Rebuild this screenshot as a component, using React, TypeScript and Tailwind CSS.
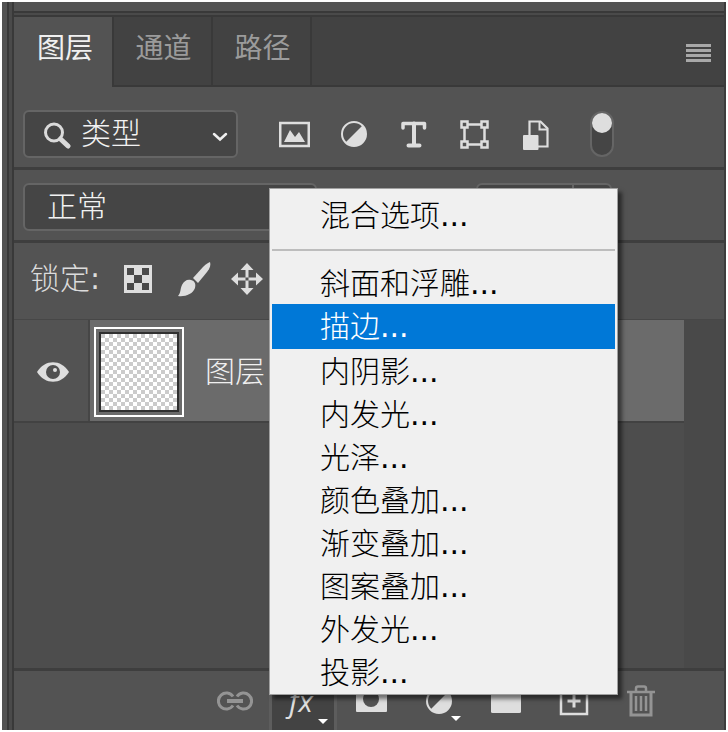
import type { ReactNode } from "react";

const FONT = "font-['DejaVu_Sans','Noto_Sans_CJK_SC',sans-serif]";

const effects = [
  "斜面和浮雕",
  "描边",
  "内阴影",
  "内发光",
  "光泽",
  "颜色叠加",
  "渐变叠加",
  "图案叠加",
  "外发光",
  "投影",
];

function Tab({ label, active = false }: { label: string; active?: boolean }) {
  return (
    <button
      role="tab"
      aria-selected={active}
      className={
        active
          ? "h-[70px] w-[100px] border-r-2 border-[#393939] bg-[#535353] pb-1.5 pl-1 text-[28px] font-normal text-[#f0f0f0]"
          : "h-[70px] w-[99px] border-r-2 border-b-2 border-[#393939] bg-[#424242] pb-1 pl-0.5 text-[28px] font-normal text-[#9b9b9b]"
      }
    >
      {label}
    </button>
  );
}

function IconButton({ label, children }: { label: string; children: ReactNode }) {
  return (
    <button aria-label={label} className="size-8 shrink-0">
      {children}
    </button>
  );
}

function FooterButton({ label, children }: { label: string; children: ReactNode }) {
  return (
    <button aria-label={label} className="flex h-full w-17 shrink-0 items-center justify-center">
      {children}
    </button>
  );
}

function HalfCircle() {
  return (
    <>
      <circle cx="16" cy="16" r="12" fill="none" stroke="#dedede" strokeWidth="2" />
      <path d="M24.5 7.5A12 12 0 0 1 7.5 24.5Z" fill="#dedede" />
    </>
  );
}

function FilterRow() {
  return (
    <div className="flex items-center border-b-3 border-[#3e3e3e] pt-[23px] pb-[9px] pl-[9px]">
      <div className="relative mr-10 w-[215px] shrink-0">
        <select
          aria-label="类型"
          className="h-12 w-full appearance-none rounded-md border-2 border-[#656565] bg-[#454545] pl-14 text-[30px] leading-10 font-light text-[#f2f2f2]"
        >
          <option>类型</option>
        </select>
        <svg viewBox="0 0 28 28" className="pointer-events-none absolute top-3 left-5 size-7" aria-hidden="true">
          <circle cx="11" cy="10.500" r="8.500" fill="none" stroke="#dadada" strokeWidth="3" />
          <path d="M17.500 17L25 24" stroke="#dadada" strokeWidth="5" strokeLinecap="round" />
        </svg>
        <svg viewBox="0 0 16 10" className="pointer-events-none absolute top-[22px] right-[10px] h-[10px] w-4" aria-hidden="true">
          <path d="M2 2L8 7.500L14 2" fill="none" stroke="#f0f0f0" strokeWidth="2.500" strokeLinecap="round" />
        </svg>
      </div>
      <div className="flex gap-7">
        <IconButton label="像素图层">
          <svg viewBox="0 0 32 32">
            <rect x="2.250" y="5" width="28.500" height="23" fill="none" stroke="#dedede" strokeWidth="2.500" />
            <path d="M6 24L12 12L17 19L21 14L27 24Z" fill="#dedede" />
          </svg>
        </IconButton>
        <IconButton label="调整图层">
          <svg viewBox="0 0 32 32">
            <HalfCircle />
          </svg>
        </IconButton>
        <IconButton label="文字图层">
          <svg viewBox="0 0 32 32">
            <path
              d="M5 10V5.500H26.500V10"
              fill="none"
              stroke="#dedede"
              strokeWidth="3.500"
              strokeLinecap="round"
              strokeLinejoin="round"
            />
            <path d="M16 5.500V27M10.500 27.500H21.500" fill="none" stroke="#dedede" strokeWidth="4" strokeLinecap="round" />
          </svg>
        </IconButton>
        <IconButton label="形状图层">
          <svg viewBox="0 0 32 32" fill="none" stroke="#dedede">
            <path d="M8 6.500H25M8 26.500H25M6.500 8V25M26.500 8V25" strokeWidth="2.500" />
            <g fill="#535353" strokeWidth="2.500">
              <rect x="3.500" y="3.500" width="6" height="6" />
              <rect x="23.500" y="3.500" width="6" height="6" />
              <rect x="3.500" y="23.500" width="6" height="6" />
              <rect x="23.500" y="23.500" width="6" height="6" />
            </g>
          </svg>
        </IconButton>
        <IconButton label="智能对象">
          <svg viewBox="0 0 32 32">
            <path d="M11.500 18V3.500H22.500L29.500 10.500V28.500H19" fill="none" stroke="#dedede" strokeWidth="2.200" />
            <path d="M21.500 4V11.500H29" fill="none" stroke="#dedede" strokeWidth="2" />
            <rect x="5" y="17" width="15.500" height="15" rx="1" fill="#dedede" />
          </svg>
        </IconButton>
      </div>
      <label className="relative ml-10 block h-[46px] w-6 shrink-0 rounded-full border-2 border-[#656565] bg-[#454545]">
        <input type="checkbox" defaultChecked aria-label="图层过滤" className="sr-only" />
        <span className="block size-5 rounded-full bg-[#dedede]" />
      </label>
    </div>
  );
}

function BlendRow() {
  return (
    <div className="flex justify-between border-b-3 border-[#3e3e3e] pt-[13px] pr-[112px] pb-[9px] pl-[9px]">
      <select
        aria-label="混合模式"
        className="h-12 w-[294px] appearance-none rounded-md border-2 border-[#656565] bg-[#454545] pl-[22px] text-[30px] leading-10 font-light text-[#f2f2f2]"
      >
        <option>正常</option>
      </select>
      <div className="flex h-12 w-[136px] rounded-md border-2 border-[#656565] bg-[#454545]">
        <input aria-label="不透明度" className="w-24 border-r-2 border-[#656565]" />
        <button aria-label="不透明度滑块" className="flex-1" />
      </div>
    </div>
  );
}

function LockRow() {
  return (
    <div className="flex h-[77px] items-center border-b border-[#474747] pr-4 pb-1 pl-4">
      <span className="w-[93px] text-[30px] leading-10 font-light text-[#dcdcdc]">
        锁定<span className="font-normal">:</span>
      </span>
      <div className="flex gap-[22px]">
        <IconButton label="锁定透明像素">
          <svg viewBox="0 0 32 32">
            <rect x="1" y="2" width="28" height="28" fill="#dedede" />
            <path d="M4 5h7v7h-7zM19 5h7v7h-7zM11 12h8v8h-8zM4 20h7v7h-7zM19 20h7v7h-7z" fill="#4a4a4a" />
          </svg>
        </IconButton>
        <IconButton label="锁定图像像素">
          <svg viewBox="0 0 32 32" fill="#dedede" className="overflow-visible">
            <path d="M33 -1C34 2 33 5 30 9L21 20L16 15L26 4C29 1 31 0 33 -1Z" />
            <path d="M14 17C18 18 19 21 18 25C16 31 8 34 1 33C4 30 3 26 5 22C7 18 10 16 14 17Z" />
          </svg>
        </IconButton>
        <IconButton label="锁定位置">
          <svg viewBox="0 0 32 32" fill="#dedede">
            <path d="M14.500 6H17.500V26H14.500ZM6 14.500V17.500H26V14.500Z" />
            <path d="M16 0L22.500 7H9.500ZM16 32L22.500 25H9.500ZM0 16L7 9.500V22.500ZM32 16L25 9.500V22.500Z" />
          </svg>
        </IconButton>
      </div>
    </div>
  );
}

function LayerList() {
  return (
    <div className="flex flex-1 bg-[#494949]">
      <div className="mr-10 flex-1 bg-[#4d4d4d]">
        <div className="flex h-[103px] border-b-2 border-[#424242] bg-[#6b6b6b]">
          <button
            aria-label="显示图层"
            className="flex w-[76px] items-center justify-center border-r-2 border-[#464646] bg-[#535353] pt-0.5 pl-1"
          >
            <svg viewBox="0 0 32 20" className="h-5 w-8">
              <path d="M0 10C8 -3 24 -3 32 10C24 23 8 23 0 10Z" fill="#dedede" />
              <circle cx="16" cy="10" r="7" fill="#505050" />
              <circle cx="18" cy="8" r="2" fill="#dedede" />
            </svg>
          </button>
          <div className="mt-[7px] ml-1 size-[90px] border-2 border-white p-[3px]">
            <div className="size-full border-2 border-[#303030] bg-[conic-gradient(#fff_25%,#cbcbcb_0_50%,#fff_0_75%,#cbcbcb_0)] bg-size-[8px_8px]" />
          </div>
          <span className="pt-8 pl-[21px] text-[30px] leading-10 font-light text-[#f0f0f0]">图层</span>
        </div>
      </div>
    </div>
  );
}

function Footer() {
  return (
    <div className="flex h-[62px] border-t-3 border-[#3e3e3e] bg-[#535353] pl-[187px]">
      <FooterButton label="链接图层">
        <svg viewBox="0 0 36 24" className="h-6 w-9" fill="none" stroke="#949494" strokeWidth="3">
          <path d="M16 7.500A8 8 0 1 0 16 16.500M20 7.500A8 8 0 1 1 20 16.500" />
          <path d="M10 12H26" strokeWidth="4" />
        </svg>
      </FooterButton>
      <button
        aria-label="图层样式"
        className="relative h-full w-17 shrink-0 border-x-3 border-[#5d5d5d] bg-[#434343] pr-1 font-['Open_Sans',sans-serif] text-[30px] leading-10 text-[#dedede] italic"
      >
        fx
        <svg viewBox="0 0 10 5" className="absolute right-1.5 bottom-1.5 h-[5px] w-[10px]">
          <path d="M0 0H10L5 5Z" fill="#fff" />
        </svg>
      </button>
      <FooterButton label="添加蒙版">
        <svg viewBox="0 0 32 32" className="size-8">
          <path d="M1 4H32V26Q32 27 31 27H2Q1 27 1 26Z" fill="#dedede" />
          <circle cx="16" cy="14" r="8" fill="#535353" />
        </svg>
      </FooterButton>
      <FooterButton label="调整图层">
        <span className="relative">
          <svg viewBox="0 0 32 32" className="size-8">
            <HalfCircle />
          </svg>
          <svg viewBox="0 0 10 5" className="absolute -right-1.5 -bottom-1 h-[5px] w-[10px]">
            <path d="M0 0H10L5 5Z" fill="#fff" />
          </svg>
        </span>
      </FooterButton>
      <FooterButton label="新建组">
        <svg viewBox="0 0 32 32" className="size-8">
          <rect x="0" y="5" width="30" height="23" rx="1.500" fill="#dedede" />
        </svg>
      </FooterButton>
      <FooterButton label="新建图层">
        <svg viewBox="0 0 32 32" className="size-8" fill="none" stroke="#dedede">
          <rect x="2" y="3" width="26" height="26" strokeWidth="2.500" />
          <path d="M15 9.500V22.500M8.500 16H21.500" strokeWidth="3" />
        </svg>
      </FooterButton>
      <FooterButton label="删除图层">
        <svg viewBox="0 0 32 32" className="size-8" fill="none" stroke="#949494">
          <path d="M0 7H28M9 6V3.500Q9 1.500 11 1.500H17Q19 1.500 19 3.500V6" strokeWidth="2.500" />
          <path d="M4 8V30H24V8" strokeWidth="3" />
          <path d="M9 11V26M14 11V26M19 11V26" strokeWidth="2.500" />
        </svg>
      </FooterButton>
    </div>
  );
}

function EffectsMenu() {
  return (
    <div
      role="menu"
      className="absolute bottom-[35px] left-[267px] w-[349px] border border-[#a0a0a0] bg-[#f0f0f0] px-0.5 pb-px text-[30px] font-light text-black shadow-[4px_4px_4px_rgba(0,0,0,0.5)]"
    >
      <button role="menuitem" className="block h-[60px] w-full pb-1.5 pl-12 text-left leading-10">
        混合选项<span className="font-normal">...</span>
      </button>
      <hr className="mb-[10px] border-t-2 border-[#bdbdbd]" />
      {effects.map((name) => (
        <button
          key={name}
          role="menuitem"
          className={
            name === "描边"
              ? "block h-[45px] w-full bg-[#0078d7] pt-px pl-12 text-left leading-10 text-white"
              : "block h-[43px] w-full pt-0.5 pl-12 text-left leading-10"
          }
        >
          {name}
          <span className="font-normal">...</span>
        </button>
      ))}
    </div>
  );
}

export default function App() {
  return (
    <div className={`${FONT} flex min-h-screen bg-white p-0.5`}>
      <div className="relative flex flex-1 overflow-hidden bg-[#535353]">
        <div className="w-[5px]" />
        <div className="w-[7px] border-x-2 border-[#393939] bg-[#4a4a4a]" />
        <div className="flex min-w-0 flex-1 flex-col border-r-2 border-[#3c3c3c]">
          <div className="h-[9px]" />
          <div className="h-1.5 border-y-2 border-[#393939] bg-[#4a4a4a]" />
          <div role="tablist" className="flex bg-[#424242]">
            <Tab label="图层" active />
            <Tab label="通道" />
            <Tab label="路径" />
            <div className="flex flex-1 items-center justify-end border-b-2 border-[#393939] pt-1 pr-[13px]">
              <button aria-label="面板菜单" className="flex w-[25px] flex-col gap-0.5">
                <span className="h-[3px] w-full bg-[#a8a8a8]" />
                <span className="h-[3px] w-full bg-[#a8a8a8]" />
                <span className="h-[3px] w-full bg-[#a8a8a8]" />
                <span className="h-[3px] w-full bg-[#a8a8a8]" />
              </button>
            </div>
          </div>
          <FilterRow />
          <BlendRow />
          <LockRow />
          <LayerList />
          <Footer />
        </div>
        <EffectsMenu />
      </div>
    </div>
  );
}
